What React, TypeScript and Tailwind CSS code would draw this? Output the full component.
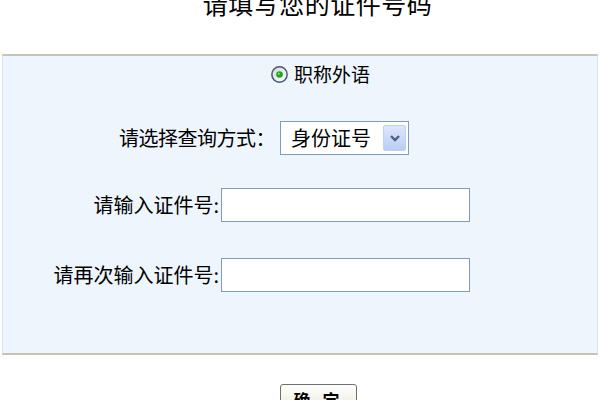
import React, { useState } from "react";

const font = { fontFamily: '"Noto Sans CJK SC", "Noto Sans", sans-serif' };

const RadioDot: React.FC = () => (
  <svg width="17" height="17" viewBox="0 0 16 16">
    <defs>
      <linearGradient id="rg" x1="0" y1="0" x2="1" y2="1">
        <stop offset="0" stopColor="#d8d8d0" />
        <stop offset="1" stopColor="#ffffff" />
      </linearGradient>
    </defs>
    <circle cx="8" cy="8" r="7.2" fill="url(#rg)" stroke="#3f5a7a" strokeWidth="1.4" />
    <circle cx="8" cy="8" r="3.1" fill="#25a025" />
    <circle cx="7.3" cy="7.3" r="1" fill="#8fe08f" />
  </svg>
);

const App: React.FC = () => {
  const [kind, setKind] = useState("身份证号");
  const [id1, setId1] = useState("");
  const [id2, setId2] = useState("");

  return (
    <div className="w-[600px] h-[400px] bg-white overflow-hidden text-black" style={font}>
      {/* title, cut off at the top */}
      <div className="h-[54px] flex justify-center pl-[35px]">
        <div className="text-[25px] leading-[25px] tracking-[0.5px] -mt-[9px]">
          请填写您的证件号码
        </div>
      </div>

      {/* form panel */}
      <div className="h-[301px] bg-[#eef5fd] border-y-2 border-[#c6c3b3] border-x border-x-[#dbe4ee] mx-[2px] flex flex-col text-[20px] leading-[20px]">
        <label className="mt-[8px] h-[20px] flex items-center pl-[268px] gap-[6px] text-[19px]">
          <RadioDot />
          <span>职称外语</span>
        </label>

        <div className="mt-[37px] flex items-center">
          <span className="w-[272px] text-right tracking-[-0.5px]">请选择查询方式：</span>
          <div className="ml-[5px] w-[129px] h-[34px] bg-white border border-[#7f9db9] flex items-center">
            <span className="flex-1 pl-[10px]">{kind}</span>
            <button
              onClick={() => setKind("身份证号")}
              className="mr-[2px] w-[23px] h-[26px] rounded-[2px] bg-gradient-to-b from-[#dde7fb] to-[#b9cdf5] border border-[#c0d0f0] flex items-center justify-center"
            >
              <svg width="12" height="9" viewBox="0 0 12 9">
                <path d="M2 2 L6 6 L10 2" fill="none" stroke="#4d6185" strokeWidth="2.4" />
              </svg>
            </button>
          </div>
        </div>

        <div className="mt-[33px] flex items-center">
          <span className="w-[216px] text-right">请输入证件号:</span>
          <input
            value={id1}
            onChange={(e) => setId1(e.target.value)}
            className="ml-[2px] w-[249px] h-[34px] bg-white border border-[#7f9db9] outline-none px-1"
          />
        </div>

        <div className="mt-[36px] flex items-center">
          <span className="w-[216px] text-right">请再次输入证件号:</span>
          <input
            value={id2}
            onChange={(e) => setId2(e.target.value)}
            className="ml-[2px] w-[249px] h-[34px] bg-white border border-[#7f9db9] outline-none px-1"
          />
        </div>
      </div>

      {/* submit */}
      <div className="pt-[29px] pl-[280px]">
        <button className="w-[77px] h-[28px] rounded-[3px] border border-[#6f6f6f] bg-gradient-to-b from-white to-[#ece9d8] text-[17px] leading-[20px] font-bold tracking-[4px] pt-[4px]">
          确 定
        </button>
      </div>
    </div>
  );
};

export default App;
